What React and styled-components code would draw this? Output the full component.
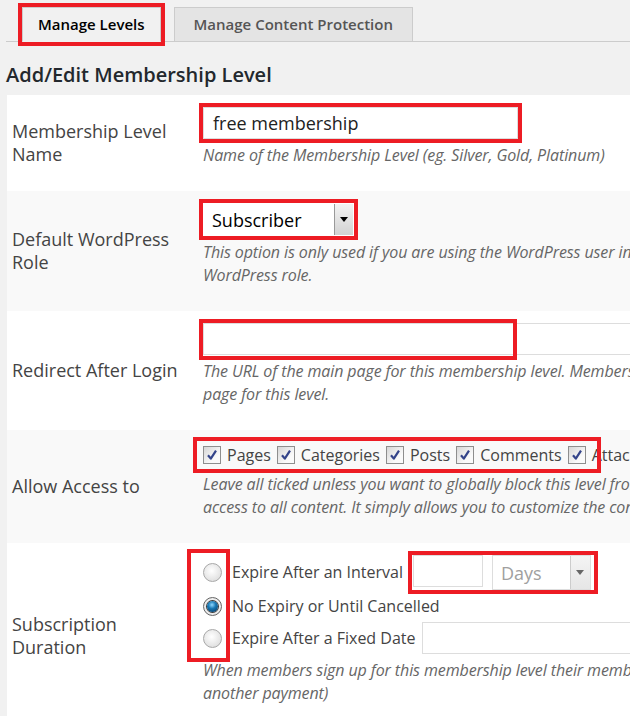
import styled, { createGlobalStyle } from "styled-components"

const RED = "#ed1c24"

const GlobalStyle = createGlobalStyle`
  html, body { margin: 0; padding: 0; background: #f1f1f1; overflow: hidden; }
  body { font-family: "Open Sans", "DejaVu Sans", sans-serif; color: #444; }
`

const Page = styled.div`
  width: 1100px;
  padding-left: 6px;
`
const TabBar = styled.div`
  display: flex;
  align-items: flex-end;
  gap: 13px;
  padding-left: 16px;
  height: 41px;
  border-bottom: 1px solid #ccc;
`
const Tab = styled.div`
  height: 35px;
  margin-bottom: -1px;
  padding: 0 ${p => (p.$active ? "15px" : "19px")} 2px;
  display: flex;
  align-items: center;
  box-sizing: border-box;
  font-size: 15px;
  font-weight: 600;
  color: ${p => (p.$active ? "#000" : "#555")};
  background: ${p => (p.$active ? "#f1f1f1" : "#e4e4e4")};
  border: 1px solid #ccc;
  border-bottom-color: ${p => (p.$active ? "#f1f1f1" : "#ccc")};
  outline: ${p => (p.$marked ? `4px solid ${RED}` : "none")};
`
const Heading = styled.h2`
  margin: 19px 0 6px;
  font-size: 20px;
  line-height: 28px;
  font-weight: 600;
  color: #23282d;
`
const FormTable = styled.div`
  margin-left: 1px;
  background: #fff;
`
const Row = styled.div`
  display: grid;
  grid-template-columns: 196px 1fr;
  background: ${p => (p.$alt ? "#f9f9f9" : "#fff")};
`
const Label = styled.div`
  align-self: center;
  padding-left: 5px;
  padding-right: 10px;
  font-size: 18px;
  line-height: 23px;
  color: #444;
`
const Field = styled.div`
  padding: 12px 0 24px;
`
const Desc = styled.p`
  margin: 5px 0 0;
  font-size: 16px;
  letter-spacing: -0.1px;
  line-height: 23px;
  font-style: italic;
  color: #666;
  white-space: nowrap;
`
const TextInput = styled.div`
  box-sizing: border-box;
  width: ${p => p.$w}px;
  height: 32px;
  padding: 0 9px;
  display: flex;
  align-items: center;
  background: #fff;
  border: 1px solid #ddd;
  font-size: 18px;
  color: #222;
  outline: ${p => (p.$marked ? `4px solid ${RED}` : "none")};
`
const Wrap = styled.div`
  position: relative;
  display: ${p => (p.$inline ? "inline-flex" : "flex")};
  align-items: center;
  gap: ${p => p.$gap || 0}px;
  margin-left: ${p => p.$ml || 0}px;
`
const Marker = styled.span`
  position: absolute;
  left: ${p => p.$l}px;
  top: ${p => p.$t}px;
  width: ${p => p.$w}px;
  height: ${p => p.$h}px;
  box-sizing: border-box;
  border: 4px solid ${RED};
  pointer-events: none;
`
const Select = styled.div`
  box-sizing: border-box;
  display: inline-flex;
  width: ${p => p.$w}px;
  height: ${p => p.$h}px;
  background: #fff;
  border: 1px solid ${p => (p.$muted ? "#ddd" : "#fff")};
  outline: ${p => (p.$marked ? `4px solid ${RED}` : "none")};
`
const SelectText = styled.span`
  flex: 1;
  display: flex;
  align-items: center;
  padding-left: 8px;
  font-size: 18px;
  color: ${p => (p.$muted ? "#a0a0a0" : "#000")};
`
const DropButton = styled.span`
  width: ${p => (p.$muted ? 19 : 18)}px;
  display: flex;
  align-items: center;
  justify-content: center;
  border-left: 1px solid ${p => (p.$muted ? "#ccc" : "#999")};
  background: ${p => (p.$muted ? "linear-gradient(#f4f4f4, #e6e6e6)" : "linear-gradient(#f3f3f3, #d2d2d2)")};
  &::after {
    content: "";
    border-left: 4px solid transparent;
    border-right: 4px solid transparent;
    border-top: 5px solid ${p => (p.$muted ? "#666" : "#000")};
  }
`
const CheckList = styled.div`
  display: flex;
  align-items: center;
  height: 26px;
  gap: 6px;
`
const CheckBox = styled.span`
  box-sizing: border-box;
  width: 18px;
  height: 18px;
  display: flex;
  align-items: center;
  justify-content: center;
  border: 1px solid #8e8e8e;
  background: linear-gradient(135deg, #d6d6d6, #fafafa 70%);
`
const CheckLabel = styled.span`
  font-size: 16px;
  color: #444;
`
const Options = styled.div`
  display: flex;
  flex-direction: column;
  gap: 3px;
`
const Option = styled.div`
  display: flex;
  align-items: ${p => (p.$top ? "flex-start" : "center")};
  min-height: ${p => p.$h || 26}px;
`
const Radio = styled.span`
  box-sizing: border-box;
  flex: none;
  width: 19px;
  height: 19px;
  margin-top: ${p => p.$mt || 0}px;
  border-radius: 50%;
  border: 1px solid ${p => (p.$checked ? "#666" : "#a8a8a8")};
  background: ${p => (p.$checked ? "radial-gradient(circle at 50% 45%, #fff 0, #e0e0e0 100%)" : "radial-gradient(circle at 45% 40%, #fff 0, #dadada 90%)")};
  display: flex;
  align-items: center;
  justify-content: center;
  &::after {
    content: "";
    display: ${p => (p.$checked ? "block" : "none")};
    width: 11px;
    height: 11px;
    border-radius: 50%;
    background: radial-gradient(circle at 45% 35%, #8fd8ff 0, #1878b4 40%, #053056 100%);
    box-shadow: 0 0 0 1px #3a3a3a;
  }
`
const OptionText = styled.span`
  margin-left: 10px;
  font-size: 16px;
  line-height: ${p => p.$lh || 26}px;
  color: #444;
`
const IntervalGroup = styled.div`
  display: flex;
  align-items: flex-start;
  gap: 9px;
  margin-left: 9px;
  padding: 0 3px 0 1px;
  outline: 4px solid ${RED};
`

const Check = () => (
  <CheckBox>
    <svg width="12" height="12" viewBox="0 0 12 12">
      <path d="M2 6.2 L4.8 9.6 L10 1.6" fill="none" stroke="#34448a" strokeWidth="2.2" strokeLinejoin="round" />
    </svg>
  </CheckBox>
)

const accessItems = ["Pages", "Categories", "Posts", "Comments", "Attachments"]

export default function App() {
  return (
    <Page>
      <GlobalStyle />
      <TabBar>
        <Tab $active $marked>Manage Levels</Tab>
        <Tab>Manage Content Protection</Tab>
      </TabBar>
      <Heading>Add/Edit Membership Level</Heading>
      <FormTable>
        <Row>
          <Label>Membership Level<br />Name</Label>
          <Field>
            <TextInput $w={315} $marked>free membership</TextInput>
            <Desc>Name of the Membership Level (eg. Silver, Gold, Platinum)</Desc>
          </Field>
        </Row>
        <Row $alt>
          <Label>Default WordPress<br />Role</Label>
          <Field>
            <Select $w={151} $h={33} $marked>
              <SelectText>Subscriber</SelectText>
              <DropButton />
            </Select>
            <Desc>
              This option is only used if you are using the WordPress user integration. This is the default
              <br />
              WordPress role.
            </Desc>
          </Field>
        </Row>
        <Row>
          <Label>Redirect After Login</Label>
          <Field>
            <Wrap>
              <TextInput $w={600} />
              <Marker $l={-4} $t={-4} $w={318} $h={41} />
            </Wrap>
            <Desc>
              The URL of the main page for this membership level. Members will be redirected to this
              <br />
              page for this level.
            </Desc>
          </Field>
        </Row>
        <Row $alt>
          <Label>Allow Access to</Label>
          <Field>
            <Wrap>
              <CheckList>
                {accessItems.map(item => (
                  <Wrap key={item} $inline $gap={6}>
                    <Check />
                    <CheckLabel>{item}</CheckLabel>
                  </Wrap>
                ))}
              </CheckList>
              <Marker $l={-10} $t={-5} $w={408} $h={36} />
            </Wrap>
            <Desc>
              Leave all ticked unless you want to globally block this level from accessing a content type. This does not give
              <br />
              access to all content. It simply allows you to customize the content protection settings.
            </Desc>
          </Field>
        </Row>
        <Row>
          <Label>Subscription<br />Duration</Label>
          <Field>
            <Wrap>
              <Options>
                <Option $h={35} $top>
                  <Radio $mt={8} />
                  <OptionText $lh={35}>Expire After an Interval</OptionText>
                  <IntervalGroup>
                    <TextInput $w={70} />
                    <Select $w={99} $h={35} $muted>
                      <SelectText $muted>Days</SelectText>
                      <DropButton $muted />
                    </Select>
                  </IntervalGroup>
                </Option>
                <Option>
                  <Radio $checked />
                  <OptionText>No Expiry or Until Cancelled</OptionText>
                </Option>
                <Option $h={32}>
                  <Radio />
                  <OptionText>Expire After a Fixed Date</OptionText>
                  <Wrap $ml={6}>
                    <TextInput $w={300} />
                  </Wrap>
                </Option>
              </Options>
              <Marker $l={-16} $t={-6} $w={43} $h={113} />
            </Wrap>
            <Desc>
              When members sign up for this membership level their membership will expire after this period (unless they make
              <br />
              another payment)
            </Desc>
          </Field>
        </Row>
      </FormTable>
    </Page>
  )
}
